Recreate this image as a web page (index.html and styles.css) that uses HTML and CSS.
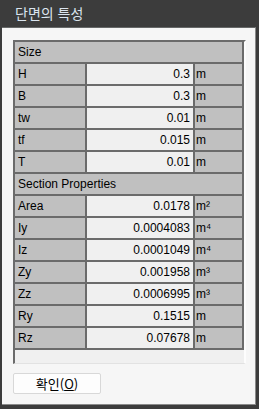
FILE: index.html
```html
<!DOCTYPE html>
<html lang="ko">
<head>
    <meta charset="UTF-8">
    <meta name="viewport" content="width=device-width, initial-scale=1.0">
    <title>단면의 특성</title>
    <link rel="stylesheet" href="styles.css">
</head>
<body>
    <div class="dialog">
        <div class="title-bar">단면의 특성</div>

        <div class="dialog-body">
            <div class="prop-panel">
                <div class="prop-grid">
                    <div class="group-row">Size</div>

                    <div class="cell label">H</div>
                    <div class="cell value">0.3</div>
                    <div class="cell unit">m</div>

                    <div class="cell label">B</div>
                    <div class="cell value">0.3</div>
                    <div class="cell unit">m</div>

                    <div class="cell label">tw</div>
                    <div class="cell value">0.01</div>
                    <div class="cell unit">m</div>

                    <div class="cell label">tf</div>
                    <div class="cell value">0.015</div>
                    <div class="cell unit">m</div>

                    <div class="cell label">T</div>
                    <div class="cell value">0.01</div>
                    <div class="cell unit">m</div>

                    <div class="group-row">Section Properties</div>

                    <div class="cell label">Area</div>
                    <div class="cell value">0.0178</div>
                    <div class="cell unit">m²</div>

                    <div class="cell label">Iy</div>
                    <div class="cell value">0.0004083</div>
                    <div class="cell unit">m⁴</div>

                    <div class="cell label">Iz</div>
                    <div class="cell value">0.0001049</div>
                    <div class="cell unit">m⁴</div>

                    <div class="cell label">Zy</div>
                    <div class="cell value">0.001958</div>
                    <div class="cell unit">m³</div>

                    <div class="cell label">Zz</div>
                    <div class="cell value">0.0006995</div>
                    <div class="cell unit">m³</div>

                    <div class="cell label">Ry</div>
                    <div class="cell value">0.1515</div>
                    <div class="cell unit">m</div>

                    <div class="cell label">Rz</div>
                    <div class="cell value">0.07678</div>
                    <div class="cell unit">m</div>
                </div>
            </div>

            <button class="ok-button" type="button">확인(<u>O</u>)</button>
        </div>
    </div>
</body>
</html>
```

FILE: styles.css
```css
/* Dialog frame */
body {
    margin: 0;
    background: #3c3c3c;
    font-family: "Liberation Sans", Arial, "Noto Sans CJK KR", sans-serif;
}

.dialog {
    width: 259px;
    height: 409px;
    box-sizing: border-box;
    background: #3c3c3c;
    padding: 0 3px 4px 2px;
    display: flex;
    flex-direction: column;
}

.title-bar {
    height: 27px;
    box-sizing: border-box;
    padding: 4px 0 0 13px;
    color: #dbe4ee;
    font-family: "Noto Sans CJK KR", sans-serif;
    font-size: 14px;
    line-height: 18px;
}

.dialog-body {
    flex: 1;
    background: #f6f6f6;
    border-top: 1px solid #666868;
    border-right: 1px solid #8a8a8a;
    border-bottom: 1px solid #8a8a8a;
    padding: 12px 0 0 11px;
}

/* Sunken property panel */
.prop-panel {
    width: 233px;
    height: 324px;
    box-sizing: border-box;
    background: #f0f0f0;
    border-top: 2px solid #6b6b6b;
    border-left: 2px solid #6b6b6b;
    border-right: 2px solid #fdfdfd;
    border-bottom: 1px solid #e2e2e2;
}

.prop-grid {
    display: grid;
    grid-template-columns: 70px 106px 47px;
    grid-auto-rows: 20px;
    gap: 2px;
    padding: 0 2px 2px 0;
    background: #6b6b6b;
    font-size: 12px;
    color: #000;
}

.group-row {
    grid-column: 1 / -1;
    background: #c0c0c0;
    padding-left: 3px;
    line-height: 20px;
}

.cell {
    line-height: 20px;
    white-space: nowrap;
}

.label {
    background: #c0c0c0;
    padding-left: 3px;
}

.value {
    background: #f0f0f0;
    text-align: right;
    padding-right: 3px;
}

.unit {
    background: #c0c0c0;
    padding-left: 1px;
}

/* OK button */
.ok-button {
    margin-top: 9px;
    width: 88px;
    height: 21px;
    padding: 0;
    background: #fdfdfd;
    border: 1px solid #d8d8d8;
    border-radius: 2px;
    font-family: "Noto Sans CJK KR", sans-serif;
    font-size: 13px;
    line-height: 17px;
    color: #000;
}
```
